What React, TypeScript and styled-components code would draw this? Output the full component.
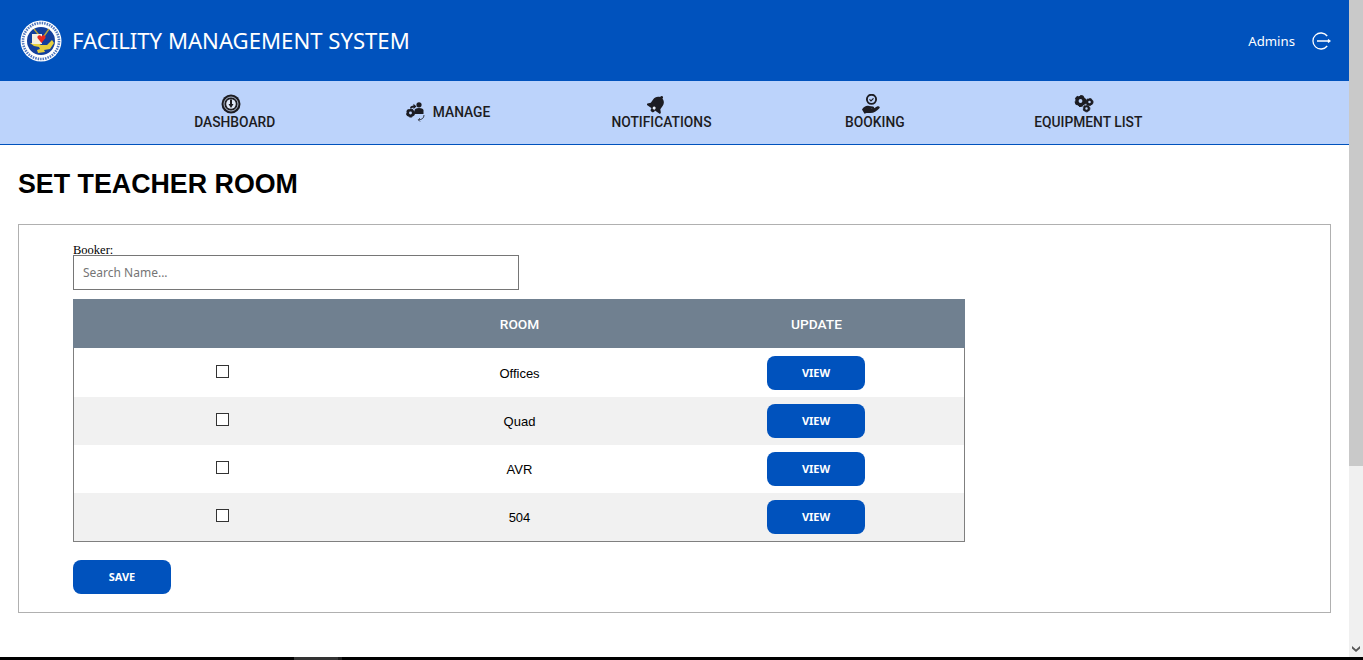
import { createGlobalStyle } from 'styled-components';
import styled from 'styled-components';

const GlobalStyle = createGlobalStyle`
  html, body {
    margin: 0;
    padding: 0;
    height: 100%;
    overflow: hidden;
    background: #fff;
  }
`;

const blue = '#0052bd';
const ink = '#1c1c22';

const Screen = styled.div`
  width: 1363px;
  height: 660px;
  display: flex;
  flex-direction: column;
  overflow: hidden;
`;

const Viewport = styled.div`
  flex: 1;
  min-height: 0;
  display: flex;
`;

const Page = styled.div`
  flex: 1;
  min-width: 0;
`;

const Header = styled.header`
  height: 81px;
  background: ${blue};
  display: flex;
  align-items: center;
  justify-content: space-between;
  padding: 0 18px 0 20px;
`;

const Brand = styled.div`
  display: flex;
  align-items: center;
  gap: 10px;
`;

const BrandName = styled.span`
  font-family: 'Noto Sans', sans-serif;
  font-size: 22.13px;
  color: #fff;
  padding-bottom: 2px;
`;

const UserBox = styled.div`
  display: flex;
  align-items: center;
  gap: 17px;
  font-family: 'Noto Sans', sans-serif;
  font-size: 13.2px;
  color: #fff;
`;

const Nav = styled.nav`
  height: 63px;
  background: #bcd3fb;
  border-bottom: 1px solid ${blue};
  display: flex;
  padding-left: 128px;
`;

const NavItem = styled.a<{ $inline?: boolean }>`
  width: 213.4px;
  display: flex;
  flex-direction: ${(props) => (props.$inline ? 'row' : 'column')};
  align-items: center;
  justify-content: center;
  gap: ${(props) => (props.$inline ? '7px' : '0')};
  font-family: Roboto, sans-serif;
  font-weight: 500;
  font-size: 13.8px;
  line-height: 16px;
  color: ${ink};
  padding-bottom: 1px;
`;

const IconSlot = styled.span<{ $inline?: boolean }>`
  height: 20px;
  display: flex;
  align-items: center;
  justify-content: center;
  margin-right: ${(props) => (props.$inline ? '0' : '8px')};
`;

const Content = styled.main`
  padding: 0 18px;
`;

const Title = styled.h1`
  margin: 0;
  padding-top: 23px;
  height: 56px;
  font-family: 'Liberation Sans', Arial, sans-serif;
  font-size: 26.8px;
  line-height: 32px;
  font-weight: 700;
  color: #000;
`;

const Panel = styled.section`
  height: 389px;
  box-sizing: border-box;
  border: 1px solid #b0b0b0;
  padding: 19px 54px 0;
`;

const FieldLabel = styled.label`
  display: block;
  padding-top: 1px;
  margin-bottom: -1px;
  font-family: 'Liberation Serif', serif;
  font-size: 12.5px;
  line-height: 11px;
  color: #000;
`;

const SearchInput = styled.input`
  display: block;
  position: relative;
  width: 446px;
  height: 35px;
  box-sizing: border-box;
  border: 1px solid #767676;
  padding: 0 9px;
  font-family: 'Noto Sans', sans-serif;
  font-size: 12px;
  background: transparent;
  &::placeholder {
    color: #757575;
    opacity: 1;
  }
`;

const RoomTable = styled.div`
  width: 892px;
  margin-top: 9px;
  box-sizing: border-box;
  border: 1px solid #7f7f7f;
  border-top: none;
`;

const RowGroup = styled.div`
  padding-top: 1px;
`;

const Row = styled.div<{ $shaded?: boolean }>`
  display: grid;
  grid-template-columns: 297px 297px 1fr;
  align-items: center;
  justify-items: center;
  height: 48px;
  background: ${(props) => (props.$shaded ? '#f1f1f1' : '#fff')};
  font-family: 'Liberation Sans', Arial, sans-serif;
  font-size: 13px;
  color: #000;
`;

const HeadRow = styled(Row)`
  height: 49px;
  margin: 0 -1px;
  width: 892px;
  grid-template-columns: 298px 297px 1fr;
  background: #708090;
  font-family: Roboto, sans-serif;
  font-weight: 500;
  font-size: 13.7px;
  color: #fff;
`;

const Tick = styled.span`
  width: 13px;
  height: 13px;
  box-sizing: border-box;
  border: 1px solid #333;
  background: #fff;
  margin-bottom: 3px;
`;

const ActionButton = styled.button`
  width: 98px;
  height: 34px;
  border: none;
  border-radius: 8px;
  background: ${blue};
  color: #fff;
  font-family: 'Noto Sans', sans-serif;
  font-weight: 700;
  font-size: 11px;
  padding: 0 0 2px;
`;

const SaveButton = styled(ActionButton)`
  display: block;
  margin-top: 18px;
`;

const Scrollbar = styled.div`
  width: 14px;
  background: #f0f0f0;
  display: flex;
  flex-direction: column;
  justify-content: space-between;
`;

const ScrollThumb = styled.div`
  height: 466px;
  background: #c9c9c9;
`;

const ScrollArrow = styled.svg`
  display: block;
  margin: 0 auto 5px;
`;

const BottomStrip = styled.div`
  height: 3px;
  background: #000;
  padding-left: 294px;
`;

const BottomTab = styled.div`
  width: 44px;
  height: 3px;
  background: #333;
  border-right: 4px solid #1e1e1e;
`;

const Crest = () => (
  <svg width="42" height="42" viewBox="0 0 42 42">
    <circle cx="21" cy="21" r="20.500" fill="#fff" />
    <circle cx="21" cy="21" r="18" fill="none" stroke="#4f76bd" strokeWidth="2.600" strokeDasharray="1.500 1" />
    <circle cx="21" cy="21" r="15" fill="#fff" />
    <circle cx="21" cy="21" r="14" fill="#123f9c" />
    <path d="M14 9l8 10M29 9l-7 10" stroke="#b9a23a" strokeWidth="1.400" />
    <path d="M10 23h8l3 2h6l5-5 2 3-4 6-6 1 1 2-7 1-1-3 3-1-1-2-5-1z" fill="#e6cf3c" />
    <rect x="12" y="14" width="10" height="10" fill="#f4efe0" />
    <path d="M21.500 23l-4-5c-.7-3 2.800-3.600 4-1.500 1.200-2.100 4.700-1.500 4 1.500z" fill="#e8281e" />
  </svg>
);

const LogoutIcon = () => (
  <svg width="19" height="18" viewBox="0 0 19 18" fill="none" stroke="#fff" strokeWidth="1.300">
    <path d="M15.200 4A8 8 0 1 0 15.200 14" />
    <path d="M5 9h13M16 7.500L18 9l-2 1.500" />
  </svg>
);

const Gear = ({ x, y, r }: { x: number; y: number; r: number }) => (
  <g fill="none" stroke={ink}>
    <circle cx={x} cy={y} r={r * 0.6} strokeWidth={r * 0.56} />
    <circle cx={x} cy={y} r={r * 0.88} strokeWidth={r * 0.24} strokeDasharray={`${r * 0.6} ${r * 0.4}`} />
  </g>
);

const DashIcon = () => (
  <svg width="20" height="20" viewBox="0 0 20 20">
    <circle cx="10" cy="10" r="9.500" fill={ink} />
    <circle cx="10" cy="10" r="7" fill="none" stroke="#cfdcf3" strokeWidth="0.800" />
    <circle cx="10" cy="10" r="4.800" fill="#dfe8f8" />
    <path d="M9 5.500h2v4.500h1.500L10 14 7.500 10H9z" fill={ink} />
  </svg>
);

const ManageIcon = () => (
  <svg width="20" height="20" viewBox="0 0 20 20">
    <Gear x={4.500} y={11} r={4.500} />
    <path d="M4 5.500C5 4 6.200 3.600 7.500 3.500V1.800L10.500 4.500 7.500 7V5.400C6.200 5.500 5.400 6 4.800 6.800z" fill={ink} />
    <circle cx="13" cy="2.800" r="2.600" fill={ink} />
    <path d="M8.500 12V8.500C8.500 7 10 6 13 6s4.500 1 4.500 2.500V12z" fill={ink} />
    <path d="M18 13c0 3-2 4.800-5.500 4.800m1.500-1.600l-1.700 1.600 1.700 1.700" fill="none" stroke={ink} strokeWidth="0.800" />
  </svg>
);

const BellIcon = () => (
  <svg width="20" height="20" viewBox="0 0 20 20">
    <g transform="rotate(35 10 10)">
      <path d="M10 .500c-.8 0-1.400.6-1.400 1.400v.6C5.800 3.200 4.200 5.600 4.200 8.500v4L1.800 15v1.500h16.400V15l-2.400-2.500v-4c0-2.900-1.600-5.300-4.400-6v-.6C11.400 1.100 10.800.500 10 .500z" fill={ink} />
      <circle cx="10" cy="17.300" r="2.200" fill={ink} />
      <circle cx="10" cy="15" r="1.500" fill="#e9effa" />
    </g>
  </svg>
);

const BookingIcon = () => (
  <svg width="20" height="20" viewBox="0 0 20 20">
    <circle cx="10.500" cy="5.300" r="4.600" fill="none" stroke={ink} strokeWidth="1.900" />
    <path d="M8.500 5.300l1.500 1.500 2.500-2.500" fill="none" stroke={ink} strokeWidth="1.200" />
    <path d="M1 15.500c2-3 4.500-4.200 7-3.500l4 .6c1.500.2 1.500 2 0 2.200H9.500c2 .4 3.500-.2 6.500-2.300 1.800-1 3.600.5 2.400 1.800-3 3.200-5.400 4.700-8.900 4.700H5.500l-2 .7z" fill={ink} />
  </svg>
);

const GearsIcon = () => (
  <svg width="20" height="20" viewBox="0 0 20 20">
    <Gear x={6.500} y={7} r={6} />
    <Gear x={15.500} y={8} r={4} />
    <Gear x={12.500} y={14.500} r={3.800} />
  </svg>
);

const rooms = ['Offices', 'Quad', 'AVR', '504'];

function App() {
  return (
    <Screen>
      <GlobalStyle />
      <Viewport>
        <Page>
          <Header>
            <Brand>
              <Crest />
              <BrandName>FACILITY MANAGEMENT SYSTEM</BrandName>
            </Brand>
            <UserBox>
              Admins
              <LogoutIcon />
            </UserBox>
          </Header>
          <Nav>
            <NavItem>
              <IconSlot>
                <DashIcon />
              </IconSlot>
              DASHBOARD
            </NavItem>
            <NavItem $inline>
              <IconSlot $inline>
                <ManageIcon />
              </IconSlot>
              MANAGE
            </NavItem>
            <NavItem>
              <IconSlot>
                <BellIcon />
              </IconSlot>
              NOTIFICATIONS
            </NavItem>
            <NavItem>
              <IconSlot>
                <BookingIcon />
              </IconSlot>
              BOOKING
            </NavItem>
            <NavItem>
              <IconSlot>
                <GearsIcon />
              </IconSlot>
              EQUIPMENT LIST
            </NavItem>
          </Nav>
          <Content>
            <Title>SET TEACHER ROOM</Title>
            <Panel>
              <FieldLabel>Booker:</FieldLabel>
              <SearchInput placeholder="Search Name..." />
              <RoomTable>
                <HeadRow>
                  <span />
                  <span>ROOM</span>
                  <span>UPDATE</span>
                </HeadRow>
                <RowGroup>
                  {rooms.map((room, index) => (
                    <Row key={room} $shaded={index % 2 === 1}>
                      <Tick />
                      <span>{room}</span>
                      <ActionButton>VIEW</ActionButton>
                    </Row>
                  ))}
                </RowGroup>
              </RoomTable>
              <SaveButton>SAVE</SaveButton>
            </Panel>
          </Content>
        </Page>
        <Scrollbar>
          <ScrollThumb />
          <ScrollArrow width="8" height="6" viewBox="0 0 8 6">
            <path d="M0 0l4 3.500L8 0v2.500L4 6 0 2.500z" fill="#555" />
          </ScrollArrow>
        </Scrollbar>
      </Viewport>
      <BottomStrip>
        <BottomTab />
      </BottomStrip>
    </Screen>
  );
}

export default App;
